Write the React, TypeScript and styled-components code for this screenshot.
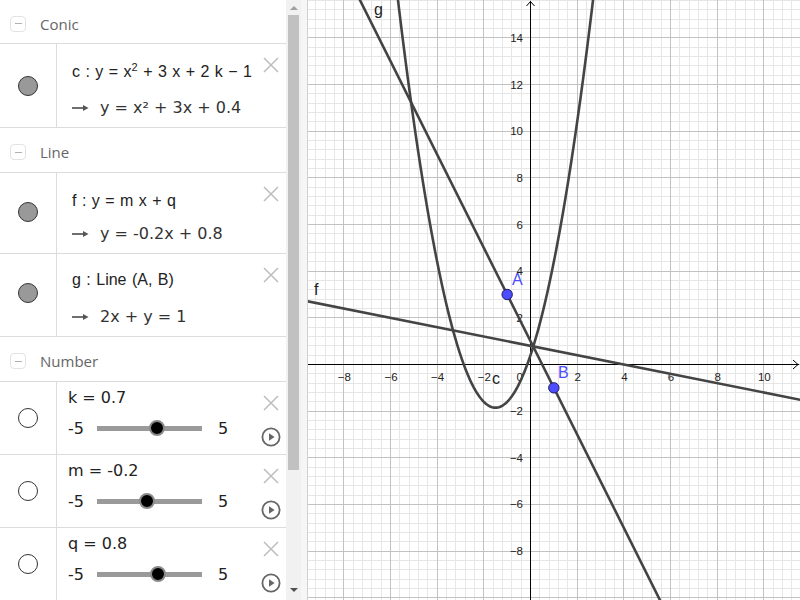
import React, { useMemo } from "react";
import styled, { createGlobalStyle } from "styled-components";

const GlobalStyle = createGlobalStyle`
  html, body {
    margin: 0;
    padding: 0;
    overflow: hidden;
    background: #fff;
  }
  body {
    font-family: "DejaVu Sans", sans-serif;
  }
`;

const AppShell = styled.div`
  display: flex;
  width: 800px;
  height: 600px;
  overflow: hidden;
`;

const AlgebraPanel = styled.div`
  width: 286px;
  height: 600px;
  flex-shrink: 0;
  overflow: hidden;
  display: flex;
  flex-direction: column;
  background: #fff;
`;

const GroupHeader = styled.div<{ $h: number }>`
  box-sizing: border-box;
  height: ${(p) => p.$h}px;
  flex-shrink: 0;
  display: flex;
  align-items: center;
  padding: 4px 0 0 10px;
  border-bottom: 1px solid #dcdcdc;
`;

const CollapseBox = styled.div`
  box-sizing: border-box;
  width: 16px;
  height: 16px;
  border: 1px solid #e3e3e3;
  border-radius: 4px;
  display: flex;
  align-items: center;
  justify-content: center;
  &::after {
    content: "";
    width: 7px;
    height: 1px;
    background: #b0b0b0;
  }
`;

const GroupTitle = styled.span`
  margin-left: 14px;
  font-family: "Open Sans", sans-serif;
  font-size: 15px;
  color: #666;
`;

const ItemRow = styled.div<{ $h: number }>`
  box-sizing: border-box;
  height: ${(p) => p.$h}px;
  flex-shrink: 0;
  display: flex;
  border-bottom: 1px solid #dcdcdc;
`;

const MarbleCell = styled.div<{ $lift?: number }>`
  width: 56px;
  flex-shrink: 0;
  border-right: 1px solid #dcdcdc;
  display: flex;
  align-items: center;
  justify-content: center;
  padding-bottom: ${(p) => p.$lift || 0}px;
`;

const Marble = styled.div<{ $filled?: boolean }>`
  box-sizing: border-box;
  width: 20px;
  height: 20px;
  border-radius: 50%;
  border: 1px solid #333;
  background: ${(p) => (p.$filled ? "#999" : "#fff")};
`;

const ItemBody = styled.div`
  flex: 1;
  display: flex;
`;

const ItemText = styled.div<{ $padTop: number; $padLeft: number }>`
  flex: 1;
  padding: ${(p) => p.$padTop}px 0 0 ${(p) => p.$padLeft}px;
`;

const ItemControls = styled.div`
  width: 30px;
  flex-shrink: 0;
  display: flex;
  flex-direction: column;
  align-items: center;
  padding-top: 13px;
  gap: 16px;
`;

const DefLine = styled.div`
  font-family: "Liberation Sans", sans-serif;
  font-size: 16px;
  line-height: 24px;
  color: #222;
  word-spacing: 1px;
  white-space: nowrap;
`;

const Sup = styled.span`
  font-size: 11px;
  position: relative;
  top: -6px;
`;

const OutputLine = styled.div<{ $gap: number }>`
  margin-top: ${(p) => p.$gap}px;
  font-family: "DejaVu Sans", sans-serif;
  font-size: 16px;
  line-height: 24px;
  color: #333;
  white-space: nowrap;
  display: flex;
  align-items: center;
`;

const ArrowMark = styled.svg`
  margin-right: 11px;
  flex-shrink: 0;
`;

const ValueLine = styled.div`
  font-family: "DejaVu Sans", sans-serif;
  font-size: 16px;
  line-height: 24px;
  color: #222;
`;

const SliderRow = styled.div`
  margin-top: 6px;
  height: 24px;
  display: flex;
  align-items: center;
  font-family: "DejaVu Sans", sans-serif;
  font-size: 16px;
  color: #222;
`;

const SliderEnd = styled.span<{ $w: number }>`
  width: ${(p) => p.$w}px;
  flex-shrink: 0;
`;

const SliderTrack = styled.div`
  position: relative;
  width: 105px;
  height: 5px;
  background: #9a9a9a;
  margin-right: 16px;
`;

const SliderKnob = styled.div`
  position: absolute;
  top: 50%;
  width: 12px;
  height: 12px;
  border-radius: 50%;
  background: #000;
  border: 2px solid #8a8a8a;
  transform: translate(-50%, -50%);
`;

const ScrollTrack = styled.div`
  width: 15px;
  height: 600px;
  flex-shrink: 0;
  background: #f1f1f1;
  display: flex;
  flex-direction: column;
  align-items: center;
`;

const ScrollArrow = styled.div<{ $down?: boolean }>`
  height: 15px;
  width: 15px;
  display: flex;
  align-items: center;
  justify-content: center;
  margin-top: ${(p) => (p.$down ? "auto" : "0")};
  margin-bottom: ${(p) => (p.$down ? "3px" : "0")};
  &::after {
    content: "";
    border-left: 4px solid transparent;
    border-right: 4px solid transparent;
    ${(p) =>
      p.$down ? "border-top: 4px solid #505050;" : "border-bottom: 4px solid #a0a0a0;"}
  }
`;

const ScrollThumb = styled.div`
  width: 11px;
  height: 455px;
  background: #c1c1c1;
`;

const Divider = styled.div`
  box-sizing: border-box;
  width: 7px;
  height: 600px;
  flex-shrink: 0;
  background: #f6f6f6;
  border-right: 1px solid #d0d0d0;
`;

const GraphPane = styled.div`
  flex: 1;
  height: 600px;
  background: #fff;
  overflow: hidden;
  svg {
    display: block;
  }
`;

const CloseIcon = () => (
  <svg width="16" height="16" viewBox="0 0 16 16">
    <path d="M1 1L15 15M15 1L1 15" stroke="#bdbdbd" strokeWidth="1.5" fill="none" />
  </svg>
);

const PlayIcon = () => (
  <svg width="20" height="20" viewBox="0 0 20 20">
    <circle cx="10" cy="10" r="8.6" stroke="#666" strokeWidth="1.8" fill="none" />
    <path d="M8 6.2L13.6 10L8 13.8Z" fill="#666" />
  </svg>
);

const Arrow = () => (
  <ArrowMark width="17" height="8" viewBox="0 0 17 8">
    <path d="M0 4H13" stroke="#555" strokeWidth="1.7" />
    <path d="M11 1L16.5 4L11 7Z" fill="#555" />
  </ArrowMark>
);

const sliders = [
  { name: "k", value: 0.7, text: "0.7" },
  { name: "m", value: -0.2, text: "-0.2" },
  { name: "q", value: 0.8, text: "0.8" },
];

// graph view constants (svg coordinates, graph starts at page x = 308)
const S = 23.333;
const OX = 222.5;
const OY = 364.5;
const GW = 492;
const GH = 600;
const sx = (x: number) => OX + x * S;
const sy = (y: number) => OY - y * S;
const crisp = (v: number) => Math.round(v - 0.5) + 0.5;

const fmt = (n: number) => (n < 0 ? "\u2212" + Math.abs(n) : String(n));

const GraphView = () => {
  const grid = useMemo(() => {
    const minor: JSX.Element[] = [];
    const major: JSX.Element[] = [];
    for (let i = -25; i <= 30; i++) {
      const x = crisp(sx(i * 0.4));
      if (x < 0 || x > GW) continue;
      const el = <line key={"x" + i} x1={x} y1={0} x2={x} y2={GH} />;
      (i % 5 === 0 ? major : minor).push(el);
    }
    for (let j = -27; j <= 40; j++) {
      const y = crisp(sy(j * 0.4));
      if (y < 0 || y > GH) continue;
      const el = <line key={"y" + j} x1={0} y1={y} x2={GW} y2={y} />;
      (j % 5 === 0 ? major : minor).push(el);
    }
    return { minor, major };
  }, []);

  const parabola = useMemo(() => {
    const pts: string[] = [];
    for (let x = -6.2; x <= 3.2; x += 0.05) {
      const y = x * x + 3 * x + 0.4;
      pts.push(`${sx(x).toFixed(2)},${sy(y).toFixed(2)}`);
    }
    return "M" + pts.join(" L");
  }, []);

  const xTicks = [-8, -6, -4, -2, 2, 4, 6, 8, 10];
  const yTicks = [14, 12, 10, 8, 6, 4, 2, -2, -4, -6, -8];

  return (
    <GraphPane>
      <svg width={GW} height={GH} viewBox={`0 0 ${GW} ${GH}`}>
        <g stroke="#e6e6e6" strokeWidth="1">{grid.minor}</g>
        <g stroke="#c2c2c2" strokeWidth="1">{grid.major}</g>

        <g stroke="#000" strokeWidth="1" fill="none">
          <line x1={0} y1={OY} x2={GW - 1} y2={OY} />
          <line x1={OX} y1={1} x2={OX} y2={GH} />
          <polyline points={`${OX - 4},6 ${OX},1.5 ${OX + 4},6`} />
          <polyline points={`${GW - 7},${OY - 4.5} ${GW - 2},${OY} ${GW - 7},${OY + 4.5}`} />
        </g>

        <g fontFamily='"Liberation Sans", sans-serif' fontSize="11.5" fill="#222">
          {xTicks.map((t) => (
            <text key={"xt" + t} x={sx(t) + 0.5} y={OY + 16} textAnchor="middle">
              {fmt(t)}
            </text>
          ))}
          {yTicks.map((t) => (
            <text key={"yt" + t} x={OX - 7.5} y={sy(t) + 4} textAnchor="end">
              {fmt(t)}
            </text>
          ))}
          <text x={OX - 7.5} y={OY + 16} textAnchor="end">
            0
          </text>
        </g>

        <g stroke="#444" strokeWidth="2.6" fill="none" strokeLinecap="round">
          <path d={parabola} />
          <line x1={sx(-10)} y1={sy(-0.2 * -10 + 0.8)} x2={sx(12)} y2={sy(-0.2 * 12 + 0.8)} />
          <line x1={sx(-8)} y1={sy(1 + 16)} x2={sx(6)} y2={sy(1 - 12)} />
        </g>

        <g fontFamily='"Liberation Sans", sans-serif' fontSize="16" fill="#222">
          <text x={66} y={15}>g</text>
          <text x={6} y={295}>f</text>
          <text x={184} y={384}>c</text>
        </g>

        <g fill="#4d4dff" stroke="#1a1a66" strokeWidth="1">
          <circle cx={sx(-1)} cy={sy(3)} r={5.2} />
          <circle cx={sx(1)} cy={sy(-1)} r={5.2} />
        </g>
        <g fontFamily='"Liberation Sans", sans-serif' fontSize="16" fill="#4d4dff">
          <text x={204} y={285}>A</text>
          <text x={250} y={378}>B</text>
        </g>
      </svg>
    </GraphPane>
  );
};

const App = () => {
  return (
    <>
      <GlobalStyle />
      <AppShell>
        <AlgebraPanel>
          <GroupHeader $h={44}>
            <CollapseBox />
            <GroupTitle>Conic</GroupTitle>
          </GroupHeader>
          <ItemRow $h={84}>
            <MarbleCell>
              <Marble $filled />
            </MarbleCell>
            <ItemBody>
              <ItemText $padTop={16} $padLeft={15}>
                <DefLine>
                  c : y = x<Sup>2</Sup> + 3 x + 2 k − 1
                </DefLine>
                <OutputLine $gap={11}>
                  <Arrow />
                  y = x² + 3x + 0.4
                </OutputLine>
              </ItemText>
              <ItemControls>
                <CloseIcon />
              </ItemControls>
            </ItemBody>
          </ItemRow>

          <GroupHeader $h={45}>
            <CollapseBox />
            <GroupTitle>Line</GroupTitle>
          </GroupHeader>
          <ItemRow $h={81}>
            <MarbleCell $lift={3}>
              <Marble $filled />
            </MarbleCell>
            <ItemBody>
              <ItemText $padTop={16} $padLeft={15}>
                <DefLine>f : y = m x + q</DefLine>
                <OutputLine $gap={9}>
                  <Arrow />
                  y = -0.2x + 0.8
                </OutputLine>
              </ItemText>
              <ItemControls>
                <CloseIcon />
              </ItemControls>
            </ItemBody>
          </ItemRow>
          <ItemRow $h={83}>
            <MarbleCell $lift={4}>
              <Marble $filled />
            </MarbleCell>
            <ItemBody>
              <ItemText $padTop={14} $padLeft={15}>
                <DefLine>g : Line (A, B)</DefLine>
                <OutputLine $gap={13}>
                  <Arrow />
                  2x + y = 1
                </OutputLine>
              </ItemText>
              <ItemControls>
                <CloseIcon />
              </ItemControls>
            </ItemBody>
          </ItemRow>

          <GroupHeader $h={45}>
            <CollapseBox />
            <GroupTitle>Number</GroupTitle>
          </GroupHeader>
          {sliders.map((s) => (
            <ItemRow key={s.name} $h={73}>
              <MarbleCell $lift={1}>
                <Marble />
              </MarbleCell>
              <ItemBody>
                <ItemText $padTop={4} $padLeft={11}>
                  <ValueLine>
                    {s.name} = {s.text}
                  </ValueLine>
                  <SliderRow>
                    <SliderEnd $w={29}>-5</SliderEnd>
                    <SliderTrack>
                      <SliderKnob style={{ left: `${((s.value + 5) / 10) * 100}%` }} />
                    </SliderTrack>
                    <SliderEnd $w={12}>5</SliderEnd>
                  </SliderRow>
                </ItemText>
                <ItemControls>
                  <CloseIcon />
                  <PlayIcon />
                </ItemControls>
              </ItemBody>
            </ItemRow>
          ))}
        </AlgebraPanel>
        <ScrollTrack>
          <ScrollArrow />
          <ScrollThumb />
          <ScrollArrow $down />
        </ScrollTrack>
        <Divider />
        <GraphView />
      </AppShell>
    </>
  );
};

export default App;
